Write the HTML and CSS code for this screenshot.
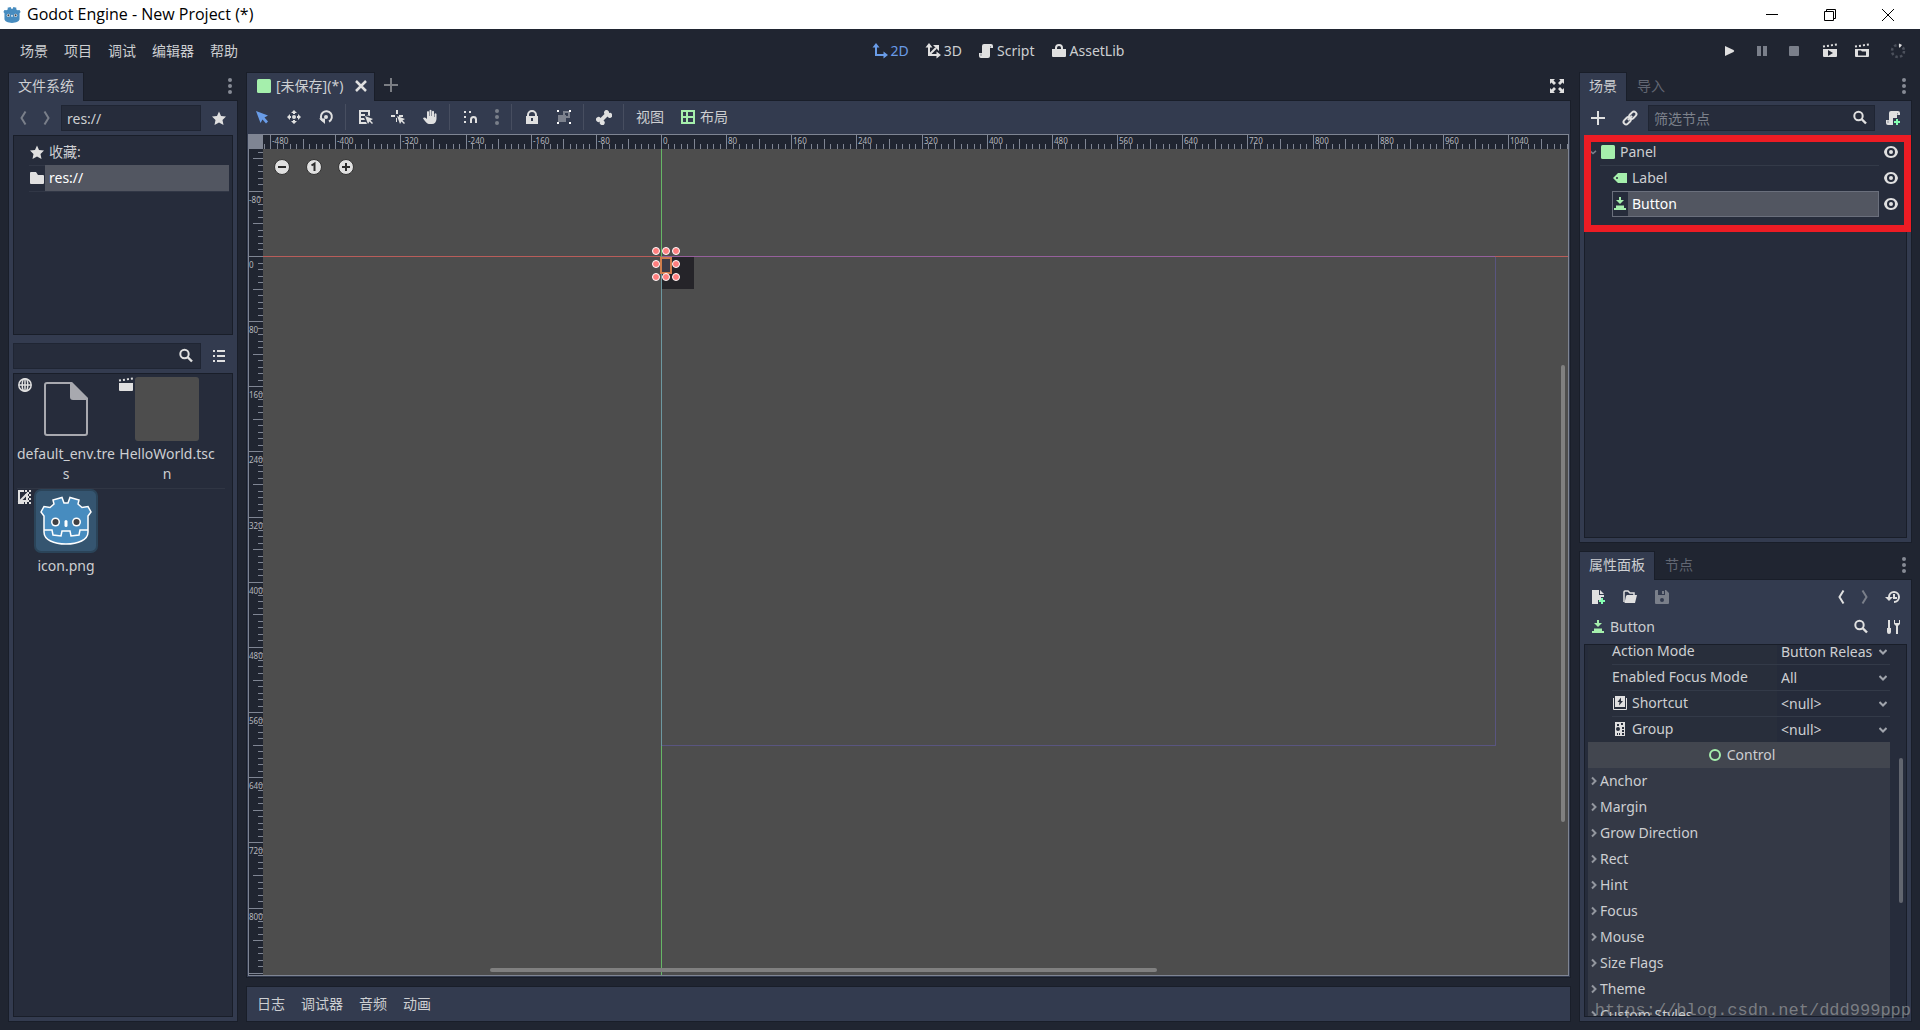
FILE: index.html
```html
<!DOCTYPE html>
<html lang="zh-CN">
<head>
<meta charset="utf-8">
<title>Godot Engine - New Project (*)</title>
<link rel="stylesheet" href="styles.css">
</head>
<body>
<svg class="defs" aria-hidden="true">
  <symbol id="godot" viewBox="0 0 64 64">
    <path d="M7 23 10 17.500 16 18.500 20 15 19 11 28 8.500 30 14H34L36 8.500 45 11 44 15 48 18.500 54 17.500 57 23 54 27V43C54 51 44 55 32 55S10 51 10 43V27Z"/>
    <path d="M10 41H18L19 46 27 47 28 42H36L37 47 45 46 46 41H54" fill="none"/>
    <g stroke="none"><circle cx="21.500" cy="33" r="4.500" fill="#fff"/><circle cx="42.500" cy="33" r="4.500" fill="#fff"/><circle cx="21.500" cy="33" r="3" fill="#414042"/><circle cx="42.500" cy="33" r="3" fill="#414042"/><rect x="30.500" y="31" width="3" height="7" rx="1.500" fill="#fff"/></g>
  </symbol>
  <symbol id="search" viewBox="0 0 16 16"><circle cx="6.500" cy="6" r="4.200" fill="none" stroke="currentColor" stroke-width="2"/><path d="M9.500 9 14 13.500" stroke="currentColor" stroke-width="2.400"/></symbol>
  <symbol id="dots" viewBox="0 0 16 16"><circle cx="8" cy="2" r="2"/><circle cx="8" cy="8" r="2"/><circle cx="8" cy="14" r="2"/></symbol>
  <symbol id="back" viewBox="0 0 16 16"><path d="M10.500 1.500 6.500 8 10.500 14.500" fill="none" stroke="currentColor" stroke-width="2"/></symbol>
  <symbol id="forward" viewBox="0 0 16 16"><path d="M5.500 1.500 9.500 8 5.500 14.500" fill="none" stroke="currentColor" stroke-width="2"/></symbol>
  <symbol id="star" viewBox="0 0 16 16"><path d="M8 1.500 10 6 15 6.500 11.500 10 12.500 15 8 12.500 3.500 15 4.500 10 1 6.500 6 6Z"/></symbol>
  <symbol id="panel" viewBox="0 0 16 16"><rect x="1" y="1" width="14" height="14" rx="1.500"/></symbol>
  <symbol id="button" viewBox="0 0 16 16"><path d="M7 1H9V4H12L8 8 4 4H7ZM4 9.500H12V12H14V14H2V12H4Z"/></symbol>
  <symbol id="eye" viewBox="0 0 16 16"><path fill-rule="evenodd" d="M8 2C4 2 1.500 5 1 8 1.500 11 4 14 8 14S14.500 11 15 8C14.500 5 12 2 8 2ZM8 4A4 4 0 1 1 8 12 4 4 0 1 1 8 4Z"/><circle cx="8" cy="8" r="2"/></symbol>
  <symbol id="script" viewBox="0 0 16 16"><path d="M6 1H13A2 2 0 0 1 15 3V5H12V13A2 2 0 0 1 10 15H3A2 2 0 0 1 1 13V10H4V3A2 2 0 0 1 6 1Z"/><path d="M3 10.500V13M12.500 3V4.500" stroke="#333b4f" stroke-opacity=".5"/></symbol>
  <symbol id="clap" viewBox="0 0 16 16"><path d="M1 6H15V13A1 1 0 0 1 14 14H2A1 1 0 0 1 1 13Z"/><path d="M1 3.500 15 1.500" stroke="currentColor" stroke-width="2" stroke-dasharray="2 2"/></symbol>
  <symbol id="chevdown" viewBox="0 0 16 16"><path d="M4 6.500 8 10 12 6.500" fill="none" stroke="currentColor" stroke-width="2"/></symbol>
  <symbol id="chevright" viewBox="0 0 8 16"><path d="M2 4.500 5.500 8 2 11.500" fill="none" stroke="currentColor" stroke-width="2"/></symbol>
</svg>

<header class="titlebar">
  <svg class="logo" viewBox="0 0 64 64"><use href="#godot"/></svg>
  <h1>Godot Engine - New Project (*)</h1>
  <button aria-label="Minimize"><svg viewBox="0 0 16 16"><path d="M2 7.500H14"/></svg></button>
  <button aria-label="Restore"><svg viewBox="0 0 16 16"><path d="M2.500 4.500H11.500V13.500H2.500ZM4.500 4.500V2.500H13.500V11.500H11.500"/></svg></button>
  <button aria-label="Close"><svg viewBox="0 0 16 16"><path d="M2 2 14 14M14 2 2 14"/></svg></button>
</header>

<nav class="menubar">
  <div class="group">
    <button>场景</button><button>项目</button><button>调试</button><button>编辑器</button><button>帮助</button>
  </div>
  <div class="group modes">
    <button class="active"><svg viewBox="0 0 16 16"><path d="M4 4V12H12" fill="none" stroke="currentColor" stroke-width="2"/><path d="M4 0 7.500 4.500H.500ZM16 12 11.500 15.500V8.500Z"/></svg>2D</button>
    <button><svg viewBox="0 0 16 16"><path d="M4 4V12H12M4 12 11 5" fill="none" stroke="currentColor" stroke-width="2"/><path d="M4 0 7.500 4.500H.500ZM16 12 11.500 15.500V8.500ZM14 2V8L8 2Z"/></svg>3D</button>
    <button><svg viewBox="0 0 16 16"><use href="#script"/></svg>Script</button>
    <button><svg viewBox="0 0 16 16"><path d="M1 6H4V5A4 4 0 0 1 12 5V6H15V13A1 1 0 0 1 14 14H2A1 1 0 0 1 1 13ZM6 6H10V5A2 2 0 0 0 6 5Z" fill-rule="evenodd"/></svg>AssetLib</button>
  </div>
  <div class="group">
    <button class="tool" aria-label="Play"><svg viewBox="0 0 16 16"><path d="M3 3 11.500 7Q13 8 11.500 9L3 13Z"/></svg></button>
    <button class="tool dim" aria-label="Pause"><svg viewBox="0 0 16 16"><path d="M3 3H7V13H3ZM9 3H13V13H9Z"/></svg></button>
    <button class="tool dim" aria-label="Stop"><svg viewBox="0 0 16 16"><rect x="3" y="3" width="10" height="10" rx="1"/></svg></button>
    <button class="tool apart" aria-label="Play scene"><svg viewBox="0 0 16 16"><use href="#clap"/><path d="M6 7 11 10 6 13Z" fill="#202531"/></svg></button>
    <button class="tool" aria-label="Play custom scene"><svg viewBox="0 0 16 16"><use href="#clap"/><path d="M4 7.500H7L8 8.500H12V12.500H4Z" fill="#202531"/></svg></button>
    <button class="tool apart" aria-label="Update spinner"><svg viewBox="0 0 16 16"><circle cx="8" cy="8" r="6" fill="none" stroke="#4b505b" stroke-width="2.500" stroke-dasharray="2.500 2.200"/><path d="M9 0.500 12 2 10 4.500H9Z"/></svg></button>
  </div>
</nav>

<main class="workspace">
  <aside class="column">
    <section class="dock">
      <div class="tabs"><button class="tab current">文件系统</button><button class="more" aria-label="Dock options"><svg viewBox="0 0 16 16"><use href="#dots"/></svg></button></div>
      <div class="panel">
        <div class="bar">
          <button class="narrow dim" aria-label="Back"><svg viewBox="0 0 16 16"><use href="#back"/></svg></button>
          <button class="narrow dim" aria-label="Forward"><svg viewBox="0 0 16 16"><use href="#forward"/></svg></button>
          <div class="field"><input type="text" value="res://" aria-label="Path"></div>
          <button class="tool" aria-label="Favorite"><svg viewBox="0 0 16 16"><use href="#star"/></svg></button>
        </div>
        <ul class="tree folders">
          <li><svg viewBox="0 0 16 16"><use href="#star"/></svg><span>收藏:</span></li>
          <li class="lined selected"><svg viewBox="0 0 16 16"><path d="M1 3A1 1 0 0 1 2 2H7L9 5H14A1 1 0 0 1 15 6V13A1 1 0 0 1 14 14H2A1 1 0 0 1 1 13Z"/></svg><span>res://</span></li>
          <li class="lined"></li>
        </ul>
        <div class="bar filter">
          <div class="field"><input type="text" aria-label="Search files"><svg viewBox="0 0 16 16"><use href="#search"/></svg></div>
          <button class="tool" aria-label="List view"><svg viewBox="0 0 16 16"><path d="M2 2H4V4H2ZM6 2H14V4H6ZM2 7H4V9H2ZM6 7H14V9H6ZM2 12H4V14H2ZM6 12H14V14H6Z"/></svg></button>
        </div>
        <ul class="files">
          <li>
            <svg class="badge" viewBox="0 0 16 16"><g fill="none" stroke="currentColor" stroke-width="1.500"><circle cx="8" cy="8" r="6.200"/><ellipse cx="8" cy="8" rx="2.800" ry="6.200"/><path d="M8 2V14M2 8H14"/></g></svg>
            <svg class="thumb" viewBox="0 0 64 64"><path d="M13 6H37L53 22V56Q53 58 51 58H13Q11 58 11 56V8Q11 6 13 6Z" fill="none" stroke="#a8a9af" stroke-width="2"/><path d="M36 6V20Q36 23 39 23H54V21L38 5Z" fill="#a8a9af"/></svg>
            <span>default_env.tres</span>
          </li>
          <li>
            <svg class="badge" viewBox="0 0 16 16"><use href="#clap"/></svg>
            <svg class="thumb" viewBox="0 0 64 64"><rect width="64" height="64" rx="3" fill="#4d4d4d"/></svg>
            <span>HelloWorld.tscn</span>
          </li>
          <li class="rule"></li>
          <li>
            <svg class="badge" viewBox="0 0 16 16"><path d="M7 2H2V14H7M3 12 10 5V12Z" fill="none" stroke="currentColor" stroke-width="2"/><path d="M8 1H10V3H8ZM12 1H14V3H12ZM10 3H12V5H10ZM8 5H10V7H8ZM12 5H14V7H12ZM10 7H12V9H10ZM12 9H14V11H12ZM10 11H12V13H10ZM12 13H14V15H12ZM8 13H10V15H8Z"/></svg>
            <svg class="thumb" viewBox="0 0 64 64"><rect x="1" y="1" width="62" height="62" rx="6" fill="#355570" stroke="#2b4459" stroke-width="2"/><use href="#godot" fill="#478cbf" stroke="#fff" stroke-width="1.500"/></svg>
            <span>icon.png</span>
          </li>
        </ul>
      </div>
    </section>
  </aside>

  <section class="column">
    <div class="dock">
      <div class="tabs">
        <button class="tab current scene"><svg class="green" viewBox="0 0 16 16"><use href="#panel"/></svg><span>[未保存](*)</span><svg class="close" viewBox="0 0 16 16"><path d="M3 3 13 13M13 3 3 13" stroke="currentColor" stroke-width="2.500"/></svg></button>
        <button class="add" aria-label="New scene"><svg viewBox="0 0 16 16"><path d="M8 1V15M1 8H15" stroke="currentColor" stroke-width="2"/></svg></button>
        <button class="more bright" aria-label="Distraction free mode"><svg viewBox="0 0 16 16"><path d="M1 1H6L4.500 2.500 7 5 5 7 2.500 4.500 1 6ZM15 1V6L13.500 4.500 11 7 9 5 11.500 2.500 10 1ZM1 15V10L2.500 11.500 5 9 7 11 4.500 13.500 6 15ZM15 15H10L11.500 13.500 9 11 11 9 13.500 11.500 15 10Z"/></svg></button>
      </div>
      <div class="panel editor">
        <div class="toolbar">
          <button class="tool active" aria-label="Select"><svg viewBox="0 0 16 16"><path d="M2 2 14 6.500 10.500 8.500 14 12.500 12 14.500 8.500 10.500 6.500 14Z"/></svg></button>
          <button class="tool" aria-label="Move"><svg viewBox="0 0 16 16"><circle cx="8" cy="8" r="2"/><path d="M8 1 11 4H9V5H7V4H5ZM8 15 5 12H7V11H9V12H11ZM1 8 4 5V7H5V9H4V11ZM15 8 12 11V9H11V7H12V5Z"/></svg></button>
          <button class="tool" aria-label="Rotate"><svg viewBox="0 0 16 16"><path d="M5 12A5.500 5.500 0 1 1 11 12.500" fill="none" stroke="currentColor" stroke-width="2"/><circle cx="8" cy="8" r="2"/><path d="M1 9.500H7V15Z"/></svg></button>
          <i></i>
          <button class="tool" aria-label="List selectable"><svg viewBox="0 0 16 16"><path d="M1 1H12V7L8 6H10V3H3V5H7V7H3V9H6L7 11H3V13H8L9 15H1Z"/><path d="M7 7 15 10 12.500 11.500 15 14 14 15 11.500 12.500 10 15Z"/></svg></button>
          <button class="tool" aria-label="Edit pivot"><svg viewBox="0 0 16 16"><path d="M6 1H8V5H6ZM1 6H5V8H1ZM9 6H13V8H9ZM6 9H7V13H6Z"/><path d="M7 7 15 10 12.500 11.500 15 14 14 15 11.500 12.500 10 15Z"/></svg></button>
          <button class="tool" aria-label="Pan"><svg viewBox="0 0 16 16"><path d="M5 3Q6 1 7 3V7H7.500V1.500Q8.500 0 9.500 1.500V7H10V2.500Q11 1 12 2.500V8H12.500V5Q13.500 3.500 14.500 5V10Q14 15 10 15H7Q5 15 1 9.500 2 7.500 5 10Z"/></svg></button>
          <i></i>
          <button class="tool" aria-label="Snap"><svg viewBox="0 0 16 16"><path d="M2 2H4V4H2ZM7 2H9V4H7ZM2 7H4V9H2ZM2 12H4V14H2Z"/><path d="M9 14V10.500A2.500 2.500 0 0 1 14 10.500V14" fill="none" stroke="currentColor" stroke-width="2"/></svg></button>
          <button class="slim dim" aria-label="Snap options"><svg viewBox="0 0 16 16"><use href="#dots"/></svg></button>
          <i></i>
          <button class="tool" aria-label="Lock"><svg viewBox="0 0 16 16"><path fill-rule="evenodd" d="M2 7H3V6A5 5 0 0 1 13 6V7H14V15H2ZM5 7H11V6A3 3 0 0 0 5 6ZM7 9V12H9V9Z"/></svg></button>
          <button class="tool" aria-label="Group"><svg viewBox="0 0 16 16"><path d="M7 2H14V9H10V13H2V6H7ZM9 4V6H10V7H12V4Z" fill="#7c818d" fill-rule="evenodd"/><path d="M1 1H3V3H1ZM13 1H15V3H13ZM1 13H3V15H1ZM13 13H15V15H13Z" fill="#fff"/></svg></button>
          <i></i>
          <button class="tool" aria-label="Skeleton"><svg viewBox="0 0 16 16"><path d="M10.500 1A2.500 2.500 0 0 0 8.500 5L4.500 9A2.500 2.500 0 1 0 4 12.500 2.500 2.500 0 1 0 7.500 11.500L11.500 7.500A2.500 2.500 0 1 0 13 4 2.500 2.500 0 0 0 10.500 1Z"/></svg></button>
          <i></i>
          <button>视图</button>
          <button><svg class="green" viewBox="0 0 16 16"><path fill-rule="evenodd" d="M1 1H15V15H1ZM3 3V7H6V3ZM8 3V7H13V3ZM3 9V13H6V9ZM8 9V13H13V9Z"/></svg>布局</button>
        </div>
        <div class="viewport">
          <div class="corner"></div>
          <svg class="ruler" id="ruler-x"></svg>
          <svg class="ruler" id="ruler-y"></svg>
          <div class="canvas">
            <svg width="100%" height="100%" shape-rendering="crispEdges">
              <rect x="398" y="108" width="33" height="32" fill="#252429"/>
              <path d="M1232.500 107V596.500H398" fill="none" stroke="#595580"/>
              <rect y="107" width="100%" height="1" fill="#b95d5a"/>
              <rect x="398" y="107" width="834" height="1" fill="#96609c"/>
              <rect x="398" width="1" height="100%" fill="#66b666"/>
              <rect x="398" y="108" width="1" height="489" fill="#6d98a0"/>
              <rect x="398" y="109" width="10" height="15" fill="#3c3b47" stroke="#cf7c4c" stroke-width="2"/>
              <g fill="#ff7f7f" stroke="#fff" shape-rendering="auto"><circle cx="393" cy="102" r="3.500"/><circle cx="403" cy="102" r="3.500"/><circle cx="413" cy="102" r="3.500"/><circle cx="393" cy="115" r="3.500"/><circle cx="413" cy="115" r="3.500"/><circle cx="393" cy="128" r="3.500"/><circle cx="403" cy="128" r="3.500"/><circle cx="413" cy="128" r="3.500"/></g>
            </svg>
            <div class="zoom">
              <button aria-label="Zoom out"><svg viewBox="0 0 16 16"><circle cx="8" cy="8" r="7.500"/><path d="M4 8H12"/></svg></button>
              <button aria-label="Zoom reset"><svg viewBox="0 0 16 16"><circle cx="8" cy="8" r="7.500"/><path d="M5.500 6.500 8.500 4.500V12"/></svg></button>
              <button aria-label="Zoom in"><svg viewBox="0 0 16 16"><circle cx="8" cy="8" r="7.500"/><path d="M4 8H12M8 4V12"/></svg></button>
            </div>
            <div class="scroll-h"></div>
            <div class="scroll-v"></div>
          </div>
        </div>
      </div>
    </div>
    <div class="bottom"><button>日志</button><button>调试器</button><button>音频</button><button>动画</button></div>
  </section>

  <aside class="column">
    <section class="dock">
      <div class="tabs"><button class="tab current">场景</button><button class="tab">导入</button><button class="more" aria-label="Dock options"><svg viewBox="0 0 16 16"><use href="#dots"/></svg></button></div>
      <div class="panel">
        <div class="bar">
          <button class="tool" aria-label="Add node"><svg viewBox="0 0 16 16"><path d="M8 1V15M1 8H15" stroke="currentColor" stroke-width="2"/></svg></button>
          <button class="tool" aria-label="Instance scene"><svg viewBox="0 0 16 16"><g fill="none" stroke="currentColor" stroke-width="2" transform="rotate(-45 8 8)"><rect x="0" y="5.500" width="8" height="5" rx="2.500"/><rect x="8" y="5.500" width="8" height="5" rx="2.500"/><path d="M5 8H11"/></g></svg></button>
          <div class="field"><input type="text" placeholder="筛选节点" aria-label="筛选节点"><svg viewBox="0 0 16 16"><use href="#search"/></svg></div>
          <button class="tool" aria-label="Attach script"><svg viewBox="0 0 16 16"><use href="#script"/><path d="M8 8H16V16H8Z" fill="#333b4f"/><path d="M12 9V15M9 12H15" stroke="#84ffb1" stroke-width="2"/></svg></button>
        </div>
        <div class="tree nodes">
          <ul>
            <li><svg class="fold" viewBox="0 0 16 16"><use href="#chevdown"/></svg><svg class="green" viewBox="0 0 16 16"><use href="#panel"/></svg><span>Panel</span><button aria-label="Toggle Panel visibility"><svg viewBox="0 0 16 16"><use href="#eye"/></svg></button></li>
            <li class="child lined"><svg class="green" viewBox="0 0 16 16"><path fill-rule="evenodd" d="M6 3H15V13H6L1 8ZM5 7A1 1 0 0 0 5 9 1 1 0 0 0 5 7Z"/></svg><span>Label</span><button aria-label="Toggle Label visibility"><svg viewBox="0 0 16 16"><use href="#eye"/></svg></button></li>
            <li class="child selected"><svg class="green" viewBox="0 0 16 16"><use href="#button"/></svg><span>Button</span><button aria-label="Toggle Button visibility"><svg viewBox="0 0 16 16"><use href="#eye"/></svg></button></li>
          </ul>
          <div class="marker"></div>
        </div>
      </div>
    </section>

    <section class="dock">
      <div class="tabs"><button class="tab current">属性面板</button><button class="tab">节点</button><button class="more" aria-label="Dock options"><svg viewBox="0 0 16 16"><use href="#dots"/></svg></button></div>
      <div class="panel">
        <div class="bar">
          <button class="tool" aria-label="New resource"><svg viewBox="0 0 16 16"><path d="M2 1H9V6H14V8H11V11H8V15H2ZM10 1 14 5H10Z"/><path d="M12 9V15M9 12H15" stroke="#84ffb1" stroke-width="2"/></svg></button>
          <button class="tool" aria-label="Load resource"><svg viewBox="0 0 16 16"><path d="M2 13V3Q2 2 3 2H6L8 4H12V6" fill="none" stroke="currentColor" stroke-width="1.500"/><path d="M5 6H15L13 14H2.500L4 7Z"/></svg></button>
          <button class="tool dim" aria-label="Save resource"><svg viewBox="0 0 16 16"><path fill-rule="evenodd" d="M1 2A1 1 0 0 1 2 1H12L15 4V14A1 1 0 0 1 14 15H2A1 1 0 0 1 1 14ZM4 1V6H11V1ZM8 9A2 2 0 1 0 8 13 2 2 0 1 0 8 9Z"/><path d="M8 2H10V5H8Z"/></svg></button>
          <span class="space"></span>
          <button class="narrow" aria-label="Previous"><svg viewBox="0 0 16 16"><use href="#back"/></svg></button>
          <button class="narrow dim" aria-label="Next"><svg viewBox="0 0 16 16"><use href="#forward"/></svg></button>
          <button class="tool" aria-label="History"><svg viewBox="0 0 16 16"><path d="M4 8A5 5 0 1 1 9 13M9 5V9H12" fill="none" stroke="currentColor" stroke-width="2"/><path d="M0 8H8L4 12Z"/></svg></button>
        </div>
        <div class="bar">
          <button class="object"><svg class="green" viewBox="0 0 16 16"><use href="#button"/></svg>Button</button>
          <button class="tool" aria-label="Search properties"><svg viewBox="0 0 16 16"><use href="#search"/></svg></button>
          <button class="tool" aria-label="Object tools"><svg viewBox="0 0 16 16"><path d="M3 1H5V9H6V13Q6 15 4 15T2 13V9H3ZM9 1V5L11 7V15H13V7L15 5V1H14V4H10V1Z"/></svg></button>
        </div>
        <div class="inspector">
          <div class="scroller">
            <div class="prop"><label for="p1">Action Mode</label><select id="p1"><option>Button Release</option></select></div>
            <div class="prop"><label for="p2">Enabled Focus Mode</label><select id="p2"><option>All</option></select></div>
            <div class="prop"><label for="p3"><svg viewBox="0 0 16 16"><path fill-rule="evenodd" d="M3 1H13V12H3ZM9 2.500 5.500 7H7.500L7 10.500 11 6H9Z"/><path d="M1.500 3V14.500H14.500V3" fill="none" stroke="currentColor"/></svg>Shortcut</label><select id="p3"><option>&lt;null&gt;</option></select></div>
            <div class="prop"><label for="p4"><svg viewBox="0 0 16 16"><path fill-rule="evenodd" d="M3 1H13V15H3ZM5 3V5H7V3ZM9 2V4H11V2ZM6 6A2 2 0 0 0 6 10 2 2 0 0 0 6 6ZM10 6V8H12V6ZM10 9V11H12V9ZM5 12V14H6V12ZM7 12V14H8V12ZM10 12V14H12V12Z"/></svg>Group</label><select id="p4"><option>&lt;null&gt;</option></select></div>
            <h2><svg class="green" viewBox="0 0 16 16"><circle cx="8" cy="8" r="5" fill="none" stroke="currentColor" stroke-width="2"/></svg>Control</h2>
            <button><svg viewBox="0 0 8 16"><use href="#chevright"/></svg>Anchor</button>
            <button><svg viewBox="0 0 8 16"><use href="#chevright"/></svg>Margin</button>
            <button><svg viewBox="0 0 8 16"><use href="#chevright"/></svg>Grow Direction</button>
            <button><svg viewBox="0 0 8 16"><use href="#chevright"/></svg>Rect</button>
            <button><svg viewBox="0 0 8 16"><use href="#chevright"/></svg>Hint</button>
            <button><svg viewBox="0 0 8 16"><use href="#chevright"/></svg>Focus</button>
            <button><svg viewBox="0 0 8 16"><use href="#chevright"/></svg>Mouse</button>
            <button><svg viewBox="0 0 8 16"><use href="#chevright"/></svg>Size Flags</button>
            <button><svg viewBox="0 0 8 16"><use href="#chevright"/></svg>Theme</button>
            <button><svg viewBox="0 0 8 16"><use href="#chevright"/></svg>Custom Styles</button>
          </div>
          <div class="thumbbar"></div>
        </div>
      </div>
    </section>
  </aside>
</main>
<div class="watermark">https://blog.csdn.net/ddd999ppp</div>
<script src="rulers.js"></script>
</body>
</html>
```
FILE: styles.css
```css
:root {
  --base: #202531;
  --panel: #333b4f;
  --inset: #262c3b;
  --edge: #191e29;
  --line: #333a48;
  --text: #cdcfd2;
  --icon: #e0e0e0;
  --green: #a5efac;
  --blue: #699ce8;
  --ruler: #7f8593;
}

* { box-sizing: border-box; }

body {
  margin: 0;
  height: 100vh;
  display: flex;
  flex-direction: column;
  overflow: hidden;
  background: var(--base);
  color: var(--text);
  font: 14px/20px "Noto Sans", "Noto Sans CJK SC", sans-serif;
}

ul { margin: 0; padding: 0; list-style: none; }

svg { flex: none; width: 16px; height: 16px; fill: currentColor; }
.defs { position: absolute; width: 0; height: 0; }

button, input, select { font: inherit; color: inherit; background: none; border: 0; margin: 0; padding: 0; }

button { display: flex; align-items: center; gap: 4px; white-space: nowrap; }
button > svg { color: var(--icon); }

.green { color: var(--green); }
button.active, button.active > svg { color: var(--blue); }
button.dim > svg { color: #7a7f8a; }

/* window title */
.titlebar { flex: none; height: 29px; padding-right: 3px; display: flex; align-items: center; background: #fff; color: #000; }
.titlebar h1 { flex: 1; margin: 0 0 0 4px; padding-bottom: 1px; font: 16px/20px "Open Sans", sans-serif; }
.titlebar .logo { width: 22px; height: 22px; margin-left: 1px; fill: #478cbf; }
.titlebar button { width: 58px; height: 29px; justify-content: center; }
.titlebar button svg { fill: none; stroke: #000; }

/* main menu */
.menubar { flex: none; height: 43px; padding: 0 8px 0 14px; display: flex; align-items: center; justify-content: space-between; }
.group { display: flex; gap: 4px; }
.group button { height: 26px; padding: 0 6px; }
.modes { margin-left: 36px; }
.modes button { gap: 3px; }
.group .apart { margin-left: 4px; }

.tool { width: 28px; height: 26px; flex: none; justify-content: center; }
.narrow { width: 20px; height: 26px; flex: none; justify-content: center; }
.slim { width: 18px; height: 26px; flex: none; justify-content: center; }

/* docks */
.workspace { flex: 1; min-height: 0; padding: 0 8px 8px; display: grid; grid-template-columns: 230px 1fr 333px; gap: 8px; }
.column { display: flex; flex-direction: column; gap: 8px; min-height: 0; min-width: 0; }
.dock { flex: 1 1 0; min-height: 0; display: flex; flex-direction: column; }
.tabs { flex: none; height: 28px; display: flex; align-items: stretch; }
.tab { border: 1px solid transparent; border-bottom: 0; padding: 0 9px 2px; color: #626773; }
.tab.current { position: relative; z-index: 1; height: 29px; background: var(--panel); border-color: var(--edge); color: var(--text); }
.tab.scene { padding-right: 5px; }
.tab .green { color: var(--green); }
.tab .close { margin-left: 6px; }
.more { margin-left: auto; width: 16px; justify-content: center; }
.more svg { color: #868b95; }
.more.bright { margin-right: 6px; }
.more.bright svg { color: var(--icon); }
.add { padding: 0 8px 2px; }
.add svg { color: #7b7e84; }
.panel { flex: 1; min-height: 0; display: flex; flex-direction: column; gap: 4px; padding: 4px; background: var(--panel); border: 1px solid var(--edge); }

.bar { flex: none; height: 26px; display: flex; gap: 4px; }
.bar .space { flex: 1; }
.filter { margin-top: 4px; }
.field { flex: 1; min-width: 0; height: 26px; display: flex; align-items: center; padding: 0 6px 0 5px; background: var(--inset); border: 1px solid #1f2533; }
.field input { flex: 1; min-width: 0; width: 0; height: 24px; outline: 0; }
.field input::placeholder { color: #7c818b; opacity: 1; }
.field svg { color: var(--icon); }

/* trees */
.tree { background: var(--inset); border: 1px solid var(--edge); padding: 3px; position: relative; }
.tree li { height: 26px; display: flex; align-items: center; color: var(--text); }
.tree li > svg { color: var(--icon); }
.tree li > svg.green { color: var(--green); }
.tree span { flex: 1; height: 26px; padding: 3px 4px; }
.tree .selected span { background: #525661; color: #fff; }
.folders { flex: none; height: 200px; padding-left: 15px; }
.folders .lined { background: linear-gradient(#313746, #313746) 0 0 / 100% 1px no-repeat; }
.nodes { flex: 1; padding: 3px 7px 3px 0; }
.nodes li { padding-left: 15px; }
.nodes .child { padding-left: 27px; }
.nodes .fold { width: 12px; margin-left: -13px; margin-right: 1px; color: #7a7f8a; }
.nodes li button { width: 16px; margin-left: 4px; }
.nodes .lined { background: linear-gradient(var(--line), var(--line)) 15px 0 / 279px 1px no-repeat; }
.nodes .selected { position: relative; }
.nodes .selected::before { content: ""; position: absolute; inset: 0 20px 0 27px; border: 1px solid #6a6f7c; }
.marker { position: absolute; top: -1px; left: -1px; right: -5px; height: 97px; border: 7px solid #ed1c24; pointer-events: none; }

/* file list */
.files { flex: 1; display: grid; grid-template-columns: 98px 98px; column-gap: 3px; align-content: start; padding: 3px; background: var(--inset); border: 1px solid var(--edge); }
.files li { position: relative; display: flex; flex-direction: column; align-items: center; gap: 3px; text-align: center; word-break: break-all; }
.files .badge { position: absolute; left: 0; top: 0; color: var(--icon); }
.files .thumb { width: 64px; height: 64px; }
.files .rule { grid-column: 1 / -1; height: 1px; margin: 4px 0 0; width: 208px; background: #303644; }

/* 2D editor */
.editor { padding: 1px; gap: 0; }
.toolbar { flex: none; height: 32px; padding-bottom: 2px; display: flex; align-items: center; gap: 4px; }
.toolbar > button:not([class]) { padding: 0 6px; height: 26px; }
.toolbar .green { color: var(--green); }
.toolbar i { width: 4px; height: 26px; background: linear-gradient(#474e60, #474e60) 1px 0 / 1px 100% no-repeat; }
.viewport { flex: 1; min-height: 0; display: grid; grid-template: 14px 1fr / 14px 1fr; border: 1px solid var(--ruler); }
.corner { background: var(--ruler); }
.ruler { width: 100%; height: 100%; overflow: hidden; background: var(--base); fill: var(--ruler); shape-rendering: crispEdges; font: 8px "Noto Sans", sans-serif; }
.ruler text { fill: #b4b6bc; }
.canvas { position: relative; overflow: hidden; background: #4d4d4d; }
.canvas > svg { position: absolute; inset: 0; width: 100%; height: 100%; }
.zoom { position: absolute; left: 11px; top: 10px; display: flex; gap: 16px; }
.zoom svg { fill: var(--icon); stroke: #333; }
.zoom path { fill: none; stroke: #2b2b2b; stroke-width: 2; }
.scroll-h { position: absolute; left: 17.4%; width: 51.1%; bottom: 3px; height: 4px; border-radius: 2px; background: #808080; }
.scroll-v { position: absolute; top: 26.2%; height: 55.3%; right: 3px; width: 4px; border-radius: 2px; background: #808080; }

.bottom { flex: none; height: 36px; display: flex; align-items: center; gap: 4px; padding: 0 4px; background: var(--panel); border: 1px solid var(--edge); }
.bottom button { padding: 0 6px; height: 26px; }

/* inspector */
.object { flex: 1; padding-left: 6px; }
.object .green { color: var(--green); }
.inspector { flex: 1; min-height: 0; display: flex; gap: 9px; padding: 0 3px; background: var(--inset); border: 1px solid var(--edge); overflow: hidden; }
.scroller { flex: 1; height: 0; margin-top: -7px; }
.scroller > * { height: 26px; width: 100%; }
.prop { display: grid; grid-template-columns: 189px 1fr; background: #282e3b; }
.prop label { display: flex; align-items: center; gap: 4px; padding-left: 24px; }
.prop svg { color: var(--icon); }
.prop + .prop { background: linear-gradient(var(--line), var(--line)) 24px 0 / 100% 1px no-repeat, #282e3b; }
.prop select { min-width: 0; height: 25px; margin-top: 1px; padding: 0 17px 0 4px; appearance: none; background: url("data:image/svg+xml,%3Csvg xmlns='http://www.w3.org/2000/svg' width='8' height='6'%3E%3Cpath d='M.5 1 4 4.500 7.500 1' fill='none' stroke='%23a0a4ac' stroke-width='2'/%3E%3C/svg%3E") right 3px center no-repeat #252b3a; }
.scroller h2 { margin: 0; padding-left: 4px; display: flex; align-items: center; justify-content: center; gap: 4px; background: #42464f; font: inherit; }
.scroller > button { background: #343946; padding-left: 2px; gap: 2px; }
.scroller > button svg { width: 8px; color: #92969e; }
.thumbbar { flex: none; width: 4px; height: 145px; margin-top: 113px; border-radius: 2px; background: #62666f; }

.watermark { position: absolute; right: 9px; bottom: 7px; color: rgba(170, 172, 172, 0.6); font: 17px/24px "Liberation Mono", monospace; pointer-events: none; }
```
FILE: rulers.js
```js
// Draws the canvas rulers: a major tick every 80 units, a middle one at 40, a minor one at 8.
const SCALE = 834 / 1024;
const NS = "http://www.w3.org/2000/svg";

function shape(svg, name, attributes, text) {
  const node = document.createElementNS(NS, name);
  for (const key in attributes) node.setAttribute(key, attributes[key]);
  if (text !== undefined) node.textContent = text;
  svg.appendChild(node);
}

function drawRuler(svg, origin, vertical) {
  svg.replaceChildren();
  const box = svg.getBoundingClientRect();
  const length = vertical ? box.height : box.width;
  const first = Math.ceil(-origin / (8 * SCALE));
  const last = Math.floor((length - origin) / (8 * SCALE));
  for (let i = first; i <= last; i++) {
    const at = Math.round(origin + i * 8 * SCALE);
    const size = i % 10 === 0 ? 14 : i % 5 === 0 ? 10 : 5;
    if (vertical) shape(svg, "rect", { x: 14 - size, y: at, width: size, height: 1 });
    else shape(svg, "rect", { x: at, y: 14 - size, width: 1, height: size });
    if (i % 10 === 0) {
      const place = vertical ? { x: 0, y: at + 12 } : { x: at + 2, y: 9 };
      shape(svg, "text", place, i * 8);
    }
  }
}

function draw() {
  drawRuler(document.getElementById("ruler-x"), 398, false);
  drawRuler(document.getElementById("ruler-y"), 107, true);
}

draw();
addEventListener("resize", draw);
```
